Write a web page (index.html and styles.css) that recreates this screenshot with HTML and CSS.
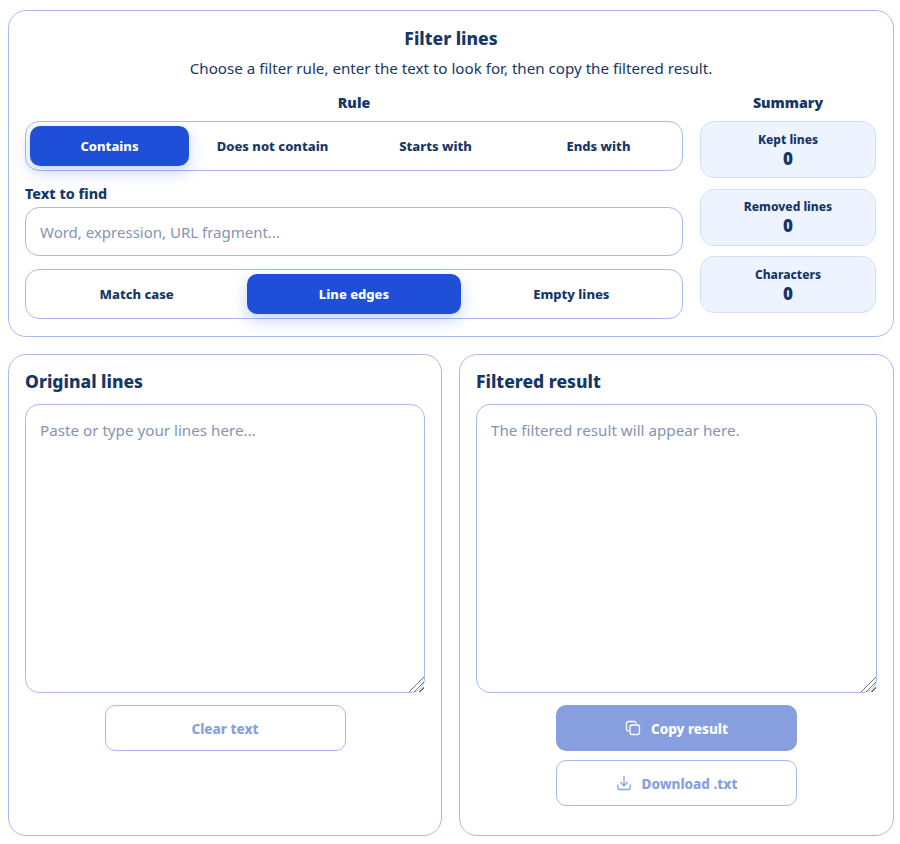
FILE: index.html
```html
<!DOCTYPE html>
<html lang="en">
<head>
    <meta charset="UTF-8">
    <meta name="viewport" content="width=device-width, initial-scale=1">
    <title>Filter lines</title>
    <link rel="stylesheet" href="styles.css">
</head>
<body>

<div class="page">
    <!-- filter options -->
    <section class="card top-card">
        <h1>Filter lines</h1>
        <p class="intro">Choose a filter rule, enter the text to look for, then copy the filtered result.</p>

        <div class="top-grid">
            <div class="options">
                <h2 class="col-title">Rule</h2>
                <div class="segments four">
                    <button class="seg active">Contains</button>
                    <button class="seg">Does not contain</button>
                    <button class="seg">Starts with</button>
                    <button class="seg">Ends with</button>
                </div>

                <label class="field-label" for="find">Text to find</label>
                <input class="find-input" id="find" type="text" placeholder="Word, expression, URL fragment...">

                <div class="segments three">
                    <button class="seg">Match case</button>
                    <button class="seg active">Line edges</button>
                    <button class="seg">Empty lines</button>
                </div>
            </div>

            <div class="summary">
                <h2 class="col-title">Summary</h2>
                <div class="stat"><span class="stat-label">Kept lines</span><strong class="stat-value">0</strong></div>
                <div class="stat"><span class="stat-label">Removed lines</span><strong class="stat-value">0</strong></div>
                <div class="stat"><span class="stat-label">Characters</span><strong class="stat-value">0</strong></div>
            </div>
        </div>
    </section>

    <!-- text areas -->
    <div class="columns">
        <section class="card text-card">
            <h2 class="panel-title">Original lines</h2>
            <textarea class="text-box" placeholder="Paste or type your lines here..."></textarea>
            <div class="actions">
                <button class="action outline">Clear text</button>
            </div>
        </section>

        <section class="card text-card">
            <h2 class="panel-title">Filtered result</h2>
            <textarea class="text-box" placeholder="The filtered result will appear here." readonly></textarea>
            <div class="actions">
                <button class="action solid">
                    <svg class="icon" viewBox="0 0 16 16"><rect x="5" y="5" width="9.5" height="9.5" rx="2.2"/><path d="M11 3.2A2 2 0 0 0 9.2 1.5H3.5a2 2 0 0 0-2 2v5.7A2 2 0 0 0 3.2 11"/></svg>
                    Copy result
                </button>
                <button class="action outline">
                    <svg class="icon" viewBox="0 0 16 16"><path d="M8 1.5v9M4.6 7.4 8 10.8l3.4-3.4"/><path d="M1.8 10v2.6a1.9 1.9 0 0 0 1.9 1.9h8.6a1.9 1.9 0 0 0 1.9-1.9V10"/></svg>
                    Download .txt
                </button>
            </div>
        </section>
    </div>
</div>

</body>
</html>
```

FILE: styles.css
```css
* {
    box-sizing: border-box;
}

body {
    margin: 0;
    font-family: "Noto Sans", "Open Sans", sans-serif;
    background: #fff;
    color: #163766;
}

.page {
    padding: 10px 6px 8px 8px;
    display: flex;
    flex-direction: column;
    gap: 17px;
}

.card {
    background: #fff;
    border: 1px solid #a6bbee;
    border-radius: 18px;
    padding: 16px;
}

.top-card {
    height: 327px;
}

h1 {
    margin: -1px 0 0;
    font-size: 17.5px;
    line-height: 24px;
    font-weight: 800;
    text-align: center;
}

.intro {
    margin: 7px 0 0;
    font-size: 15.15px;
    line-height: 22px;
    text-align: center;
}

.top-grid {
    display: grid;
    grid-template-columns: 658px 176px;
    gap: 17px;
    margin-top: 14px;
}

.col-title {
    margin: 0 0 9px;
    font-size: 14.2px;
    line-height: 19px;
    font-weight: 900;
    text-align: center;
}

.segments {
    display: grid;
    gap: 4px;
    padding: 4px;
    border: 1px solid #a6bbee;
    border-radius: 14px;
    background: #fff;
    height: 50px;
}

.segments.four {
    grid-template-columns: repeat(4, 1fr);
}

.segments.three {
    grid-template-columns: repeat(3, 1fr);
}

.seg {
    border: none;
    border-radius: 10px;
    background: transparent;
    color: #163766;
    font-family: inherit;
    font-size: 13px;
    font-weight: 800;
    padding: 0;
    cursor: pointer;
}

.seg.active {
    background: #1f4fd8;
    color: #fff;
    box-shadow: 0 6px 16px rgba(31, 79, 216, 0.25);
}

.field-label {
    display: block;
    margin: 13px 0 4px;
    font-size: 14.3px;
    line-height: 19px;
    font-weight: 800;
}

.find-input {
    display: block;
    width: 100%;
    height: 49px;
    padding: 0 14px;
    border: 1px solid #a6bbee;
    border-radius: 14px;
    font-family: inherit;
    font-size: 15px;
    color: #163766;
    outline: none;
}

.find-input + .segments {
    margin-top: 13px;
}

::placeholder {
    color: #8494b3;
    opacity: 1;
}

.summary {
    display: flex;
    flex-direction: column;
}

.stat {
    height: 57px;
    margin-bottom: 10.5px;
    padding-top: 2px;
    border: 1px solid #d3dffa;
    border-radius: 14px;
    background: #eef4ff;
    display: flex;
    flex-direction: column;
    align-items: center;
    justify-content: center;
}

.stat-label {
    font-size: 12px;
    line-height: 16px;
    font-weight: 800;
}

.stat-value {
    font-size: 17px;
    line-height: 22px;
    font-weight: 900;
}

.columns {
    display: grid;
    grid-template-columns: 434px 1fr;
    gap: 17px;
}

.text-card {
    height: 482px;
    display: flex;
    flex-direction: column;
}

.panel-title {
    margin: -2px 0 11px;
    font-size: 17.5px;
    line-height: 24px;
    font-weight: 800;
}

.text-box {
    display: block;
    width: 100%;
    height: 289px;
    padding: 14px;
    border: 1px solid #a6bbee;
    border-radius: 14px;
    font-family: inherit;
    font-size: 15.2px;
    line-height: 22px;
    color: #163766;
    outline: none;
    resize: vertical;
}

/* the hatched drag corner */
.text-box::-webkit-resizer {
    background:
        linear-gradient(135deg, #fff 50%, transparent 50%),
        repeating-linear-gradient(135deg, transparent 0 1.5px, #777 1.5px 2.8px, transparent 2.8px 4px);
}

.actions {
    display: flex;
    flex-direction: column;
    align-items: center;
    gap: 9px;
    margin-top: 12px;
}

.action {
    width: 241px;
    height: 46px;
    padding: 1px 0 0;
    border-radius: 10px;
    font-family: inherit;
    font-size: 13.5px;
    font-weight: 800;
    display: flex;
    align-items: center;
    justify-content: center;
    gap: 10px;
    cursor: pointer;
}

.action.outline {
    background: #fff;
    border: 1px solid #a6bbee;
    color: #87a0df;
}

.action.solid {
    background: #879fdf;
    border: none;
    color: #fff;
}

.icon {
    width: 16px;
    height: 16px;
    margin-top: -2px;
    fill: none;
    stroke: currentColor;
    stroke-width: 1.3;
    stroke-linecap: round;
    stroke-linejoin: round;
}
```
